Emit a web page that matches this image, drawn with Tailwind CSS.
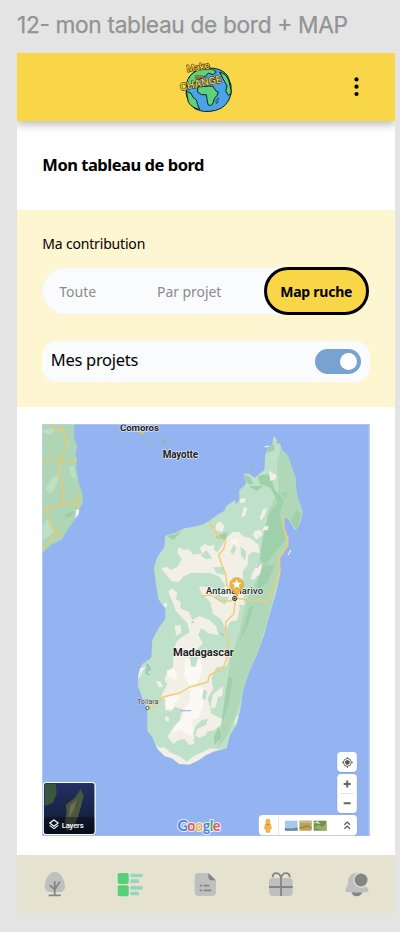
<!DOCTYPE html>
<html lang="fr">
<head>
<meta charset="utf-8">
<title>Mon tableau de bord</title>
<script src="https://cdn.jsdelivr.net/npm/@tailwindcss/browser@4"></script>
</head>
<body class="w-[400px] h-[932px] overflow-hidden bg-[#e4e4e4] pl-[17.3px] font-['Noto_Sans',sans-serif] text-black">
<div class="h-[53.3px] pt-[8px] whitespace-nowrap font-['Inter',sans-serif]"><svg class="block w-[340px] h-[34px]" viewBox="0 0 340 34"><text x="0" y="25.4" textLength="331" font-family="Inter, sans-serif" font-size="22.7" fill="#939393" stroke="#939393" stroke-width=".25">12- mon tableau de bord + MAP</text></svg></div>
<div class="w-[377.4px] h-[860px] flex flex-col bg-white overflow-hidden">
  <header class="relative h-[67.4px] shrink-0 bg-[#f9d648] shadow-[0_4px_8px_rgba(0,0,0,0.25)]">
    <svg class="w-full h-[67px]" viewBox="17.3 53.3 377.4 67">
      <g transform="translate(170 55) scale(.33333)" stroke="#102018" stroke-width="3" stroke-linejoin="round">
        <path d="M57 70Q72 43 112 40Q154 38 173 62L184 91V118Q174 158 138 167Q102 176 76 162Q54 144 49 116Z" fill="#4aa3e8"/>
        <path d="M54 75Q66 50 98 42L128 43L140 52L130 60L116 55L108 64L94 70L78 82L62 94L50 98Z" fill="#5fd07c"/>
        <path d="M150 52Q172 58 178 80L184 106V116L176 122L168 108L172 94L160 72Z" fill="#5fd07c"/>
        <path d="M50 110L64 116L70 128L80 136L84 150L90 164Q66 160 56 142Z" fill="#5fd07c"/>
        <path d="M84 98L94 94L104 96L116 94L130 95L138 108L146 112L142 122L134 132L130 146L122 153L115 150L112 134L110 120L96 120L84 112Z" fill="#5fd07c"/>
        <path d="M146 130L139 137L140 147L144 143Z" fill="#5fd07c" stroke-width="2"/>
        <g font-family="Inter, sans-serif" fill="#f9d648" stroke="#3a3010" stroke-width="3.500" paint-order="stroke">
          <text transform="translate(53 53) rotate(-10)" font-size="28" font-weight="500" textLength="69" lengthAdjust="spacingAndGlyphs">Make</text>
          <text transform="translate(78 74) rotate(-10)" font-size="15" font-weight="700" textLength="24" fill="#d9a83c" stroke-width="2">the</text>
          <text transform="translate(33 109) rotate(-12)" font-size="31" font-weight="500" textLength="128" lengthAdjust="spacingAndGlyphs">CHANGE</text>
        </g>
      </g>
      <g fill="#000"><circle cx="356.8" cy="79.7" r="2.1"/><circle cx="356.8" cy="87" r="2.1"/><circle cx="356.8" cy="94.3" r="2.1"/></g>
    </svg>
  </header>
  <h1 class="h-[89.7px] shrink-0 pl-[25px] pt-[31px] text-[16.5px] leading-[26px] font-bold tracking-[-0.48px]">Mon tableau de bord</h1>
  <section class="h-[197px] shrink-0 bg-[#fef5d1] px-[25px]">
    <h2 class="pt-[23px] text-[14px] leading-[22px] tracking-[-0.18px]">Ma contribution</h2>
    <div class="mt-[11.7px] h-[48px] rounded-full bg-[#fafbfd] border border-[#f3f4f4] flex items-center text-[14px] text-[#8b8b8b]">
      <span class="w-[98px] pl-[16px]">Toute</span>
      <span class="w-[124px] pl-[16.4px] tracking-[-0.05px]">Par projet</span>
      <button class="w-[105px] h-[48px] shrink-0 rounded-full border-[3px] border-black bg-[#f9d648] text-black font-bold text-[14px] tracking-[-0.25px] whitespace-nowrap">Map ruche</button>
    </div>
    <div class="mt-[25.5px] h-[41.5px] rounded-[15px] bg-[#fafbfd] flex items-center justify-between pl-[8.5px] pr-[8.5px]">
      <span class="text-[16.5px] tracking-[-0.3px] leading-[24px] pb-[2px]">Mes projets</span>
      <span class="w-[46px] h-[25px] rounded-full bg-[#78a2d0] flex items-center justify-end pr-[4px]"><i class="size-[17.5px] rounded-full bg-white"></i></span>
    </div>
  </section>
  <main class="grow pt-[16.4px] pl-[25px]">
    <svg class="block w-[327.4px] h-[412.5px]" viewBox="42.3 424 327.4 412.5" font-family="Roboto, sans-serif">
      <defs>
        <path id="coast" d="M274 436.500L277 440L276 443L280 444L282 450L288 456L292 468L295.500 478L296.700 495L302.700 512L300 523L296 530L290 521L286 516L283.500 520L285 531L288.500 538L287 547L280 558L280.500 572L276.700 590L270 613L264 635L256.700 655L249 672L243 690L240 711L237 724L230 735L226.700 748L215 751L206 755L199 760L190 764.300L180 764L172 758L165 756L158 749L153 737L148 731V710L144 700L138.500 686L139 674L143 664L152 658L153 640L160 627L166 619L166 609L159 599L157 586L154.500 568L158 557L165 547L166 536L176 533L184 529L194 527L203 525L210 521L218 515L225 511L227 506L233 502L235 500L236 505L240 500V490L245 486L247 482L244 474L249 474L255 478L265 470L266 455L269 447L273 445Z"/>
        <clipPath id="isl"><use href="#coast"/></clipPath>
        <linearGradient id="shade" x1="0" y1="0" x2="0" y2="1"><stop offset="0" stop-color="#243064"/><stop offset=".6" stop-color="#172443"/><stop offset="1" stop-color="#090f1e"/></linearGradient>
      </defs>
      <rect x="42" y="424" width="328" height="413" fill="#94b3f1"/>
      <!-- mainland -->
      <g transform="translate(30 415) scale(.33333)">
        <path d="M36 27H134L133 70L144 95L137 115L141 135L140 160L147 205L158 234L160 262L148 283L137 311L113 345L96 374L65 389L36 415Z" fill="#aed5b5"/>
        <path d="M46 222L70 185L88 180L82 205L75 223L60 235ZM36 335L55 310L60 330L74 350L50 370L36 380ZM36 50L62 38L78 44L60 60ZM118 158L132 150L140 190L128 190Z" fill="#c0e1c9" opacity=".8"/>
        <path d="M105 300L133 288L128 302L110 309Z" fill="#9bcea6"/>
        <path d="M65 27L76 44L100 48V27M100 48L113 83L104 105L91 139L66 126L36 141M91 139L109 143L139 136L140 130M91 139L87 170L98 205L100 267L46 284L36 275M100 267L124 264L150 252L147 233M124 264L151 277M53 284L57 316L70 341L96 356L73 360L55 383L36 407" fill="none" stroke="#edc968" stroke-width="4"/>
        <path d="M140 285L148 282L147 297L137 310Z" fill="#fff"/>
        <path d="M325 45L343 52L336 60ZM392 77L405 73L415 87L405 84ZM352 85L370 90L354 89Z" fill="#88bfa0"/>
        <path d="M325 47L343 57" stroke="#e5c958" stroke-width="5"/>
      </g>
      <use href="#coast" fill="#c0e1c9" stroke="#c0e1c9" stroke-width=".6"/>
      <g clip-path="url(#isl)">
        <rect x="130" y="430" width="180" height="340" fill="#c0e1c9"/>
        <path d="M282 444L310 500L299 532L288 520L292 540L280 572L268 620L252 670L238 710L228 735L218 748L222 720L226 690L231 660L240 630L247 600L257 580L263 540L269 510L279 490L277 464Z" fill="#afd7b8"/>
        <g fill="#9fd0aa">
          <path d="M244 474L250 477L254 484L248 484ZM258 476L268 474L272 479L275 490L284 500L280 515L284 530L286 540L277 550L266 564L260 560L263 540L269 515L278 502L271 488L260 484ZM297 510L302 514L297 530L291 521ZM266 446L274 444L275 450L268 453Z"/>
          <path d="M263 566L275 565L268 582L258 590L254 596ZM250 606L254 606L247 628L240 640ZM229 676L233 679L229 704L222 724L225 700ZM219 726L222 736L215 745L214 737ZM167 536L176 534L183 530L174 540Z"/>
          <path d="M217 536L228 532L226 540L216 538ZM249 486L264 486L257 491ZM281 494L288 492L286 498ZM146 662L151 670L146 674Z"/>
        </g>
        <g transform="translate(200 415) scale(.33333)" fill="#f2efe6">
          <path d="M208 167L230 181L228 193L212 198ZM119 252L136 250L137 262L122 265ZM132 276L143 279L136 302L125 307ZM190 284L203 278L196 300L184 316L180 309ZM50 325L62 320L75 334L67 352L47 344ZM165 348L185 345L188 360L170 374L160 360ZM192 335L207 332L204 345L188 347Z"/>
          <path d="M-5 460L20 440L42 425L62 400L80 370L98 352L117 350L132 365L153 370L177 390L180 415L160 410L146 420L144 450L130 467L128 510L135 570L95 570L75 500L50 475L25 470L2 475Z"/>
          <path d="M0 400L15 386L27 393L45 390L42 405L12 422ZM152 490L180 447L187 450L181 478L160 494Z"/>
          <path d="M102 388L110 400L101 420L92 410ZM122 393L140 410L137 435L124 423Z" fill="#c0e1c9"/>
          <path d="M92 375L112 369L116 390L97 385ZM8 448L42 428L55 433L40 460Z" fill="#faf7f2"/>
        </g>
        <g transform="translate(130 540) scale(.33333)" fill="#f2efe6">
          <path d="M95 85L110 80L125 90L145 78L157 56L144 42L145 22L162 29L178 28L190 44L220 40L235 20L266 38L279 50L318 55L335 90L332 117L300 130L318 160L330 205L323 240L300 246L290 268L273 237L250 222L242 187L215 160L208 139L242 142L269 155L288 139L270 110L240 98L183 99L160 110L148 125L125 124Z"/>
          <path d="M116 155L127 145L143 159L138 178L154 186L151 205L178 217L188 240L209 228L240 240L260 260L266 286L237 280L215 264L205 284L220 310L190 340H130L140 306L157 290L180 277L173 250L154 230L138 212L130 188ZM135 257L153 255L155 278L139 288ZM96 195L112 187L112 202ZM365 105L378 80L393 68L394 85L374 117Z"/>
          <path d="M250 82L282 80L286 105L260 99ZM253 150L276 171L298 170L285 194L258 175ZM212 46L231 30L247 55L228 58Z" fill="#c0e1c9"/>
        </g>
        <g transform="translate(130 650) scale(.33333)" fill="#f2efe6">
          <path d="M132 0H285L298 22L291 48L260 52L246 82L250 117L234 145L245 190L236 207L216 210L198 228L191 248L197 278L178 286L165 268L146 270L130 282L114 259L130 234L150 210L158 178L129 169L126 184L106 180L105 148L94 141L103 121L113 103L104 89L112 67L130 51Z"/>
          <path d="M249 133L266 120L281 107L277 137L264 142L258 172L242 176ZM241 190L276 206L274 224L254 241L231 245L228 255L207 265L196 259L202 238L229 224ZM70 275L90 293L104 292L123 308L150 319L171 335L192 318L225 303L241 295L281 299L276 315L190 350H130L96 320ZM32 55L50 49L39 62L36 80ZM78 94H92L101 111L88 112ZM107 198L119 203L116 216L106 210ZM125 244L139 250L142 274L129 272Z"/>
          <path d="M111 62L132 54L142 70L139 91L119 84ZM165 24L212 31L218 62L202 106L183 119L164 76ZM184 108L223 114L222 169L204 204L187 208L191 248L180 256L148 238L126 252L134 229L157 208L165 178L181 150ZM109 141L147 132L148 145L136 160L132 178L109 174Z" fill="#fcf8f3"/>
          <path d="M180 20H206L197 51L184 48ZM222 116L233 126L226 153L217 143ZM190 270L201 256L219 277L202 292Z" fill="#c0e1c9"/>
        </g>
      </g>
      <g fill="none" stroke="#f2cb74" stroke-width="1.400" stroke-linejoin="round">
        <path d="M208 522L213 527L217 534L220 538L226 541L224 549L219 555L222 565L226 573L227 585L233 593L236 598L234 614L226 622L226 632L229 640L228 656L223 669L210 675L208 682L190 687L180 693L163 697L155 706L149 709M202 596L211 595L220 601L231 601L236 598L248 600L268 601L272 590L279 575L280 571L279 558L288 546L288 539L284 528L284 518L287 516"/>
      </g>
      <g fill="none" stroke="#8eabea" stroke-width="1"><path d="M181 710.700H191.500M257 568L260 564M148 664L151 670M146 673L150 675M192 622H194M221 633L224 636"/></g>
      <path d="M265 447L269 446M288.500 555L291 550M139 678L141 668M238 716L235 724" stroke="#fff" stroke-width="1" fill="none"/>
      <path d="M251 466L254 465V469L251 468Z" fill="#88bfa0"/>
      <!-- labels -->
      <g fill="#1f2124" stroke="#fff" stroke-opacity=".7" stroke-width="1.300" paint-order="stroke" stroke-linejoin="round">
        <text x="120.300" y="430.900" font-size="9.800" font-weight="700" textLength="39">Comoros</text>
        <text x="163" y="457.700" font-size="10" font-weight="700" textLength="35.500">Mayotte</text>
        <text x="206.300" y="594" font-size="9.300" font-weight="500" textLength="57">Antananarivo</text>
        <text x="173.300" y="656" font-size="11.200" font-weight="700" textLength="61">Madagascar</text>
        <text x="137.500" y="704.300" font-size="6.800" fill="#333" stroke-width=".7" textLength="21">Toliara</text>
      </g>
      <circle cx="235" cy="598.500" r="2.100" fill="#bbb" stroke="#222" stroke-width="1"/><circle cx="235" cy="598.500" r=".8" fill="#222"/>
      <circle cx="147.800" cy="708" r="1.600" fill="#fff" stroke="#444" stroke-width=".9"/>
      <path d="M237 598Q236 593 232 589.500A7 7 0 1 1 242 589.500Q238 593 237 598Z" fill="#e9b348" stroke="#d39c3c" stroke-width=".5"/>
      <path d="M237 579.500L238.300 582.600L241.600 582.900L239.100 585.100L239.900 588.300L237 586.600L234.100 588.300L234.900 585.100L232.400 582.900L235.700 582.600Z" fill="#fff"/>
      <!-- layers -->
      <rect x="43" y="782" width="53" height="53" rx="4" fill="#fff"/>
      <svg x="44" y="783" width="51" height="51" viewBox="0 0 51 51">
        <rect width="51" height="51" rx="3" fill="url(#shade)"/>
        <path d="M1 1H12L13 10L9 20L1 23Z" fill="#38573c"/>
        <path d="M37 6L40 13L38 21L34 35L29 46L23 48L21 40L23 29L22 22L31 15Z" fill="#49573d"/>
        <path d="M33 17L30 27L25 35L27 22Z" fill="#756b51"/>
        <rect y="34" width="51" height="17" rx="3" fill="#050a15" opacity=".4"/>
        <path d="M6 40L10.300 37L14.500 40L10.300 43.300ZM6 42.400L10.300 45.600L14.500 42.400" fill="none" stroke="#fff" stroke-width="1.100"/>
        <text x="18" y="45" font-size="7.800" font-weight="500" fill="#fff" textLength="22">Layers</text>
      </svg>
      <!-- attribution -->
      <text x="177.800" y="831.500" font-family="Lato, sans-serif" font-size="14.500" font-weight="700" textLength="43" stroke="#fff" stroke-width="2" paint-order="stroke" stroke-opacity=".8"><tspan fill="#4d80e2">G</tspan><tspan fill="#df584c">o</tspan><tspan fill="#edb941">o</tspan><tspan fill="#4d80e2">g</tspan><tspan fill="#44a766">l</tspan><tspan fill="#df584c">e</tspan></text>
      <!-- controls -->
      <g fill="#6c83b5" opacity=".4"><rect x="337" y="752.500" width="20.600" height="20.300" rx="4.500"/><rect x="337" y="774.500" width="20.600" height="39.300" rx="4.500"/><rect x="258.500" y="815.500" width="99.200" height="21" rx="4"/></g>
      <g fill="#fff"><rect x="337.500" y="752" width="19.700" height="20" rx="4"/><rect x="337.500" y="774" width="19.700" height="39" rx="4"/><rect x="259" y="815" width="98.300" height="20.500" rx="4"/></g>
      <g stroke="#666" fill="none" stroke-width="1"><circle cx="347.700" cy="762.400" r="3.900"/><circle cx="347.700" cy="762.400" r="1.900" fill="#555" stroke="#555"/><path d="M347.700 757V759M347.700 766V768M342.300 762.400H344.300M351.300 762.400H353.300"/></g>
      <path d="M344 784H351M347.500 780.500V787.500M344 803.200H351" stroke="#666" stroke-width="2" fill="none"/>
      <path d="M341 793.500H354M279 816V835" stroke="#e3e3e3" stroke-width="1" fill="none"/>
      <path d="M344.700 824.700L347.500 822L350.300 824.700M344.700 828.700L347.500 826L350.300 828.700" stroke="#555" stroke-width="1.200" fill="none"/>
      <g fill="#efb74a" stroke="#d99b38" stroke-width=".4"><path d="M265.700 823.700H270.700L271.900 828.500L270.500 829L270 832.400H266.500L266 829L264.500 828.500Z"/><circle cx="268.200" cy="821.200" r="2.200"/></g><path d="M266.500 823.700L268.200 825.700L270 823.700Z" fill="#e07538"/>
      <rect x="285.200" y="820.700" width="12.700" height="10" fill="#a4cce9"/><path d="M285.200 828L291 828.500L297.900 827.500V830.700H285.200Z" fill="#7087a2"/>
      <rect x="299.700" y="820.700" width="12.300" height="10" fill="#bda052"/><path d="M299.700 820.700H312V823H299.700Z" fill="#b9bd9c"/><path d="M300 828L308 826L312 828" stroke="#927d3e" fill="none"/>
      <rect x="314" y="820.700" width="12.800" height="10" fill="#719253"/><path d="M314 828L319 825L323 827L326.800 823V830.700Z" fill="#96b564"/><path d="M314 823L318 821L321 824Z" fill="#d0d9bb"/>
      <rect x="42.800" y="424.500" width="326.400" height="411.500" fill="none" stroke="#c2d2f4" stroke-width="1" opacity=".6"/>
    </svg>
  </main>
  <nav class="h-[58.3px] shrink-0 bg-[#e5e2d0]">
    <svg class="w-full h-full" viewBox="17.3 855 377.400 58.300">
      <g transform="translate(10 850) scale(.33333)">
        <path d="M135 66C116 66 105 91 105 109C105 122 112 126 123 126H148C160 126 166 120 166 108C165 90 153 66 135 66Z" fill="#bfbfbf"/>
        <path d="M135 96V136M122 107L135 119L149 97M119 136H151" fill="none" stroke="#858585" stroke-width="5.500" stroke-linecap="round"/>
        <rect x="324" y="69" width="33" height="33" rx="6" fill="#59cf78"/><rect x="324" y="106" width="33" height="33" rx="6" fill="#59cf78"/>
        <g fill="#94d5bb"><rect x="362" y="71" width="37" height="11" rx="4"/><rect x="362" y="88" width="26" height="11" rx="4"/><rect x="362" y="108" width="37" height="11" rx="4"/><rect x="362" y="125" width="26" height="11" rx="4"/></g>
      </g>
      <g transform="translate(200 850) scale(.33333)">
        <path d="M-3 69H26L49 91V126Q49 138 37 138H-3Q-15 138 -15 126V81Q-15 69 -3 69Z" fill="#bfbfbf"/>
        <path d="M26 69L48 91H38Q26 91 26 80Z" fill="#858585"/>
        <path d="M2 107H5M14 107H27M2 121H5M14 121H33" stroke="#858585" stroke-width="5.500" stroke-linecap="round"/>
        <rect x="208" y="84" width="71" height="54" rx="11" fill="#bfbfbf"/>
        <path d="M208 111H279M244 80V138M244 84C239 64 219 66 219 82M244 84C249 64 270 66 270 82" fill="none" stroke="#858585" stroke-width="5.500"/>
        <path d="M455 127H488Q483 139 471 139Q459 139 455 127Z" fill="#858585"/>
        <path d="M470 68C450 70 445 84 445 99C445 109 437 114 437 122Q438 127 445 127H498Q507 127 507 121C506 115 500 112 497 107L485 68Z" fill="#bfbfbf"/>
        <circle cx="484" cy="90" r="23" fill="#e5e2d0"/><circle cx="484" cy="90" r="19.500" fill="#858585"/>
      </g>
    </svg>
  </nav>
</div>
</body>
</html>
